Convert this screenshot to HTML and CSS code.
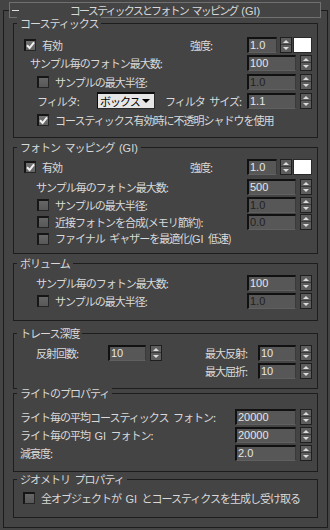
FILE: index.html
```html
<!DOCTYPE html>
<html lang="ja">
<head>
<meta charset="utf-8">
<title>コースティックスとフォトン マッピング (GI)</title>
<link rel="stylesheet" href="styles.css">
</head>
<body>
<div class="rollout">
  <div class="rollout-head">
    <span class="minus"></span>
    <span class="rollout-title">コースティックスとフォトン マッピング <span class="lat">(GI)</span></span>
  </div>

  <div class="group g-caustics">
    <div class="group-title">コースティックス</div>
    <div class="row pad-check">
      <span class="cb on"><svg width="9" height="9" viewBox="0 0 9 9"><path d="M1 4.2 L3.6 7 L8 1.4" fill="none" stroke="#f2f2f2" stroke-width="2"/></svg></span>
      <span>有効</span>
      <div class="ctrls">
        <span class="lbl-strength">強度:</span>
        <span class="num w30">1.0</span><span class="spin sm"></span><span class="swatch"></span>
      </div>
    </div>
    <div class="row pad-label">
      <span>サンプル毎のフォトン最大数:</span>
      <div class="ctrls"><span class="num">100</span><span class="spin"></span></div>
    </div>
    <div class="row h19 pad-sub">
      <span class="cb"></span><span>サンプルの最大半径:</span>
      <div class="ctrls"><span class="num off">1.0</span><span class="spin"></span></div>
    </div>
    <div class="row h19 pad-sub">
      <span class="lbl-filter">フィルタ:</span>
      <span class="dropdown">ボックス<span class="dd-arrow"></span></span>
      <span class="lbl-fsize">フィルタ サイズ:</span>
      <div class="ctrls"><span class="num">1.1</span><span class="spin"></span></div>
    </div>
    <div class="row h19 pad-sub">
      <span class="cb on"><svg width="9" height="9" viewBox="0 0 9 9"><path d="M1 4.2 L3.6 7 L8 1.4" fill="none" stroke="#f2f2f2" stroke-width="2"/></svg></span>
      <span>コースティックス有効時に不透明シャドウを使用</span>
    </div>
  </div>

  <div class="group g-photon">
    <div class="group-title">フォトン マッピング <span class="lat">(GI)</span></div>
    <div class="row h20 pad-check">
      <span class="cb on"><svg width="9" height="9" viewBox="0 0 9 9"><path d="M1 4.2 L3.6 7 L8 1.4" fill="none" stroke="#f2f2f2" stroke-width="2"/></svg></span>
      <span>有効</span>
      <div class="ctrls">
        <span class="lbl-strength">強度:</span>
        <span class="num w30">1.0</span><span class="spin sm"></span><span class="swatch"></span>
      </div>
    </div>
    <div class="row h19 pad-sub2">
      <span>サンプル毎のフォトン最大数:</span>
      <div class="ctrls"><span class="num">500</span><span class="spin"></span></div>
    </div>
    <div class="row h17 pad-sub">
      <span class="cb"></span><span>サンプルの最大半径:</span>
      <div class="ctrls"><span class="num off">1.0</span><span class="spin"></span></div>
    </div>
    <div class="row h17 pad-sub">
      <span class="cb"></span><span>近接フォトンを合成(メモリ節約):</span>
      <div class="ctrls"><span class="num off">0.0</span><span class="spin"></span></div>
    </div>
    <div class="row h17 pad-sub">
      <span class="cb"></span><span>ファイナル ギャザーを最適化(<span class="lat">GI</span> 低速)</span>
    </div>
  </div>

  <div class="group g-volume">
    <div class="group-title">ボリューム</div>
    <div class="row pad-sub2">
      <span>サンプル毎のフォトン最大数:</span>
      <div class="ctrls"><span class="num">100</span><span class="spin"></span></div>
    </div>
    <div class="row pad-sub">
      <span class="cb"></span><span>サンプルの最大半径:</span>
      <div class="ctrls"><span class="num off">1.0</span><span class="spin"></span></div>
    </div>
  </div>

  <div class="group g-trace">
    <div class="group-title">トレース深度</div>
    <div class="row pad-sub2">
      <span class="lbl-refl">反射回数:</span>
      <span class="num w38">10</span><span class="spin"></span>
      <div class="ctrls">
        <span class="lbl-max">最大反射:</span>
        <span class="num w38">10</span><span class="spin"></span>
      </div>
    </div>
    <div class="row pad-sub2">
      <div class="ctrls">
        <span class="lbl-max">最大屈折:</span>
        <span class="num w38">10</span><span class="spin"></span>
      </div>
    </div>
  </div>

  <div class="group g-light">
    <div class="group-title">ライトのプロパティ</div>
    <div class="row pad-light">
      <span>ライト毎の平均コースティックス フォトン:</span>
      <div class="ctrls"><span class="num w61">20000</span><span class="spin"></span></div>
    </div>
    <div class="row pad-light">
      <span>ライト毎の平均 <span class="lat">GI</span> フォトン:</span>
      <div class="ctrls"><span class="num w61">20000</span><span class="spin"></span></div>
    </div>
    <div class="row pad-light">
      <span>減衰度:</span>
      <div class="ctrls"><span class="num w61">2.0</span><span class="spin"></span></div>
    </div>
  </div>

  <div class="group g-geom">
    <div class="group-title">ジオメトリ プロパティ</div>
    <div class="row pad-geo">
      <span class="cb"></span><span>全オブジェクトが <span class="lat">GI</span> とコースティクスを生成し受け取る</span>
    </div>
  </div>
</div>
</body>
</html>
```

FILE: styles.css
```css
* { box-sizing: border-box; }

html, body {
  margin: 0;
  background: #444444;
}

body {
  font-family: "Noto Sans CJK JP", "Noto Sans", sans-serif;
  font-size: 11px;
  line-height: 14px;
  letter-spacing: -1px;
  word-spacing: 3px;
  color: #d9d9d9;
}

.lat {
  letter-spacing: 0;
  font-family: "Liberation Sans", Arial, sans-serif;
}

.rollout {
  margin: 10px 2px 0 3px;
  border: 1px solid #1d1d1d;
  padding: 0 9px 9px 9px;
}

.rollout-head {
  margin: -9px -3px 0 -4px;
  height: 16px;
  border: 1px solid #707070;
  background: #444444;
  display: grid;
  grid-template-columns: 14px 1fr 14px;
  align-items: center;
}

.minus {
  width: 7px;
  height: 1px;
  margin-left: 2px;
  background: #e0e0e0;
}

.rollout-title {
  text-align: center;
  white-space: nowrap;
  letter-spacing: -1.8px;
}

.group {
  position: relative;
  border: 1px solid #1d1d1d;
  padding-right: 5px;
}

.group-title {
  position: absolute;
  top: -8px;
  left: 3px;
  padding: 0 3px;
  background: #444444;
  line-height: 14px;
  white-space: nowrap;
}

.g-caustics { margin-top: 5px; padding-top: 12px; padding-bottom: 8px; }
.g-photon   { margin-top: 9px; padding-top: 9px; padding-bottom: 6px; }
.g-volume   { margin-top: 9px; padding-top: 10px; padding-bottom: 10px; }
.g-trace    { margin-top: 12px; padding-top: 10px; padding-bottom: 8px; }
.g-light    { margin-top: 4px; padding-top: 14px; padding-bottom: 9px; }
.g-geom     { margin-top: 7px; padding-top: 9px; padding-bottom: 10px; }

.row {
  display: flex;
  align-items: center;
  height: 18px;
  white-space: nowrap;
}
.row.h17 { height: 17px; }
.row.h19 { height: 19px; }
.row.h20 { height: 20px; }

.pad-check { padding-left: 10px; }
.pad-label { padding-left: 16px; }
.pad-sub   { padding-left: 23px; }
.pad-sub2  { padding-left: 22px; }
.pad-light { padding-left: 6px; }
.pad-geo   { padding-left: 9px; }

.ctrls {
  margin-left: auto;
  display: flex;
  align-items: center;
}

.cb {
  flex: none;
  width: 12px;
  height: 12px;
  margin-right: 6px;
  border-top: 2px solid #161616;
  border-left: 2px solid #161616;
  border-right: 1px solid #262626;
  border-bottom: 1px solid #262626;
  background: linear-gradient(#666666, #585858);
  display: flex;
  align-items: center;
  justify-content: center;
}
.cb.on { background: linear-gradient(#727272, #646464); }
.cb svg { display: block; }

.num {
  flex: none;
  width: 49px;
  height: 16px;
  padding-left: 1px;
  background: #575757;
  border-top: 2px solid #111111;
  border-left: 2px solid #111111;
  border-right: 1px solid #3a3a3a;
  border-bottom: 1px solid #606060;
  font-family: "Liberation Sans", Arial, sans-serif;
  font-size: 11px;
  line-height: 13px;
  letter-spacing: 0;
  color: #e6e6e6;
}
.num.off { color: #222222; }
.num.w30 { width: 30px; }
.num.w38 { width: 38px; }
.num.w61 { width: 61px; }

.spin {
  flex: none;
  width: 12px;
  height: 16px;
  margin-left: 4px;
  border: 1px solid #1f1f1f;
  background: linear-gradient(to bottom, #5d5d5d 0 6px, #3a3a3a 6px 7px, #5d5d5d 7px);
  display: flex;
  flex-direction: column;
  align-items: center;
}
.spin.sm { margin-left: 3px; }
.spin::before {
  content: "";
  width: 0;
  height: 0;
  margin-top: 2px;
  border-left: 3px solid transparent;
  border-right: 3px solid transparent;
  border-bottom: 3px solid #dddddd;
}
.spin::after {
  content: "";
  width: 0;
  height: 0;
  margin-top: auto;
  margin-bottom: 2px;
  border-left: 3px solid transparent;
  border-right: 3px solid transparent;
  border-top: 3px solid #dddddd;
}

.swatch {
  flex: none;
  width: 19px;
  height: 16px;
  margin-left: 1px;
  background: #ffffff;
  border: 1px solid #2a2a2a;
}

.lbl-strength { margin-right: 35px; }

.lbl-filter { width: 60px; flex: none; }
.lbl-fsize { margin-left: 10px; }

.dropdown {
  flex: none;
  width: 58px;
  height: 17px;
  display: flex;
  align-items: center;
  padding-left: 2px;
  background: #e6e6e6;
  border-top: 2px solid #0d0d0d;
  border-left: 1px solid #0d0d0d;
  border-right: 1px solid #2a2a2a;
  border-bottom: 1px solid #2a2a2a;
  color: #000000;
}
.dd-arrow {
  margin-left: auto;
  margin-right: 4px;
  width: 0;
  height: 0;
  border-left: 4px solid transparent;
  border-right: 4px solid transparent;
  border-top: 4px solid #000000;
}

.lbl-refl { width: 72px; flex: none; }
.lbl-max { margin-right: 11px; }
```
